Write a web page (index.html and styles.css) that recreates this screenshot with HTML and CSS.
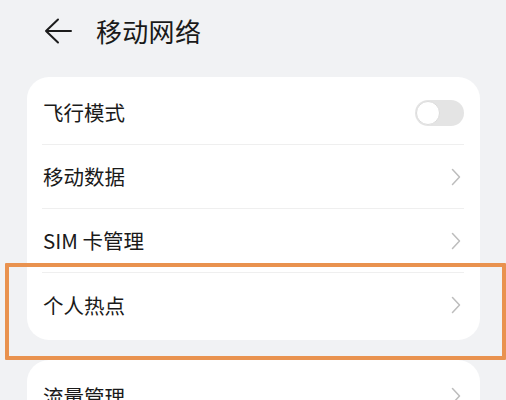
FILE: index.html
```html
<!DOCTYPE html>
<html lang="zh">
<head>
<meta charset="utf-8">
<link rel="stylesheet" href="styles.css">
</head>
<body>
<div class="page">
  <header class="header">
    <svg class="back" width="28" height="26" viewBox="0 0 28 26"><path d="M14 1.5 L2 13 L14 24.5 M2 13 H27" fill="none" stroke="#1c1c1c" stroke-width="2" stroke-linecap="round" stroke-linejoin="round"/></svg>
    <h1 class="title">移动网络</h1>
  </header>
  <section class="card">
    <div class="row"><div class="row-inner"><span class="label">飞行模式</span><span class="toggle"><span class="thumb"></span></span></div></div>
    <div class="row"><div class="row-inner"><span class="label">移动数据</span><svg class="chev" width="10" height="18" viewBox="0 0 10 18"><path d="M1.5 1.5 L8.5 9 L1.5 16.5" fill="none" stroke="#bdbdbd" stroke-width="1.5" stroke-linecap="round" stroke-linejoin="round"/></svg></div></div>
    <div class="row"><div class="row-inner"><span class="label">SIM 卡管理</span><svg class="chev" width="10" height="18" viewBox="0 0 10 18"><path d="M1.5 1.5 L8.5 9 L1.5 16.5" fill="none" stroke="#bdbdbd" stroke-width="1.5" stroke-linecap="round" stroke-linejoin="round"/></svg></div></div>
    <div class="row last"><div class="row-inner"><span class="label">个人热点</span><svg class="chev" width="10" height="18" viewBox="0 0 10 18"><path d="M1.5 1.5 L8.5 9 L1.5 16.5" fill="none" stroke="#bdbdbd" stroke-width="1.5" stroke-linecap="round" stroke-linejoin="round"/></svg></div></div>
  </section>
  <section class="card card2">
    <div class="row last"><div class="row-inner"><span class="label">流量管理</span><svg class="chev" width="10" height="18" viewBox="0 0 10 18"><path d="M1.5 1.5 L8.5 9 L1.5 16.5" fill="none" stroke="#bdbdbd" stroke-width="1.5" stroke-linecap="round" stroke-linejoin="round"/></svg></div></div>
  </section>
  <div class="highlight"></div>
</div>
</body>
</html>
```

FILE: styles.css
```css
html, body {
  margin: 0;
  padding: 0;
  background: #f1f2f4;
  font-family: "Noto Sans CJK SC", "Noto Sans", sans-serif;
  color: #1a1a1a;
}
.page {
  position: relative;
  width: 506px;
  height: 400px;
  overflow: hidden;
}
.header {
  height: 61px;
  display: flex;
  align-items: center;
  padding-left: 44px;
  gap: 24px;
}
.back {
  display: block;
  margin-top: 1px;
}
.title {
  margin: 0;
  font-size: 26px;
  font-weight: 400;
  line-height: 1;
  letter-spacing: 0.3px;
}
.card {
  margin: 16px 26px 0 27px;
  background: #ffffff;
  border-radius: 22px;
  padding: 4px 16px 3px 15px;
}
.card2 {
  margin-top: 20px;
}
.row {
  height: 64px;
}
.row-inner {
  height: 63px;
  border-bottom: 1px solid #efefef;
  display: flex;
  align-items: center;
  justify-content: space-between;
  padding-left: 1px;
}
.row.last .row-inner {
  border-bottom: none;
  height: 64px;
}
.label {
  font-size: 20.5px;
  font-weight: 400;
  line-height: 1;
}
.chev {
  margin-right: 3px;
  display: block;
}
.toggle {
  position: relative;
  width: 49px;
  height: 26px;
  border-radius: 13px;
  background: #e4e4e4;
}
.thumb {
  position: absolute;
  left: 1px;
  top: 1px;
  width: 22px;
  height: 22px;
  border-radius: 50%;
  background: #ffffff;
  border: 1px solid #dcdcdc;
}
.highlight {
  position: absolute;
  left: 5px;
  top: 263px;
  width: 493px;
  height: 89px;
  border: 4px solid #e9924f;
  border-radius: 1px;
}
```
